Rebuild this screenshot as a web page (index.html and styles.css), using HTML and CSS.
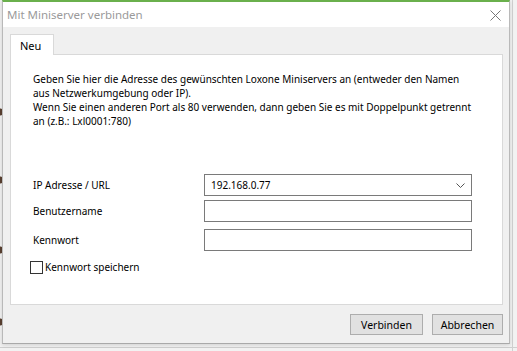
FILE: index.html
```html
<!DOCTYPE html>
<html lang="de">
<head>
    <meta charset="UTF-8">
    <title>Mit Miniserver verbinden</title>
    <link rel="stylesheet" href="styles.css">
</head>
<body>
    <div class="backdrop">
        <div class="dialog">
            <div class="titlebar">
                <span class="title">Mit Miniserver verbinden</span>
                <svg class="close" width="11" height="11" viewBox="0 0 11 11">
                    <path d="M0.5 0.5 L10.5 10.5 M10.5 0.5 L0.5 10.5" stroke="#777" stroke-width="1" fill="none"/>
                </svg>
            </div>

            <div class="body">
                <div class="tabs">
                    <div class="tab">Neu</div>
                </div>

                <div class="panel">
                    <p class="info">
                        Geben Sie hier die Adresse des gewünschten Loxone Miniservers an (entweder den Namen<br>
                        aus Netzwerkumgebung oder IP).<br>
                        Wenn Sie einen anderen Port als 80 verwenden, dann geben Sie es mit Doppelpunkt getrennt<br>
                        an (z.B.: Lxl0001:780)
                    </p>

                    <div class="form">
                        <div class="row row-ip">
                            <label>IP Adresse / URL</label>
                            <div class="combo">
                                <span>192.168.0.77</span>
                                <svg width="9" height="5" viewBox="0 0 9 5">
                                    <path d="M0.5 0.5 L4.5 4.5 L8.5 0.5" stroke="#555" stroke-width="1" fill="none"/>
                                </svg>
                            </div>
                        </div>
                        <div class="row row-user">
                            <label>Benutzername</label>
                            <div class="field"></div>
                        </div>
                        <div class="row row-pass">
                            <label>Kennwort</label>
                            <div class="field"></div>
                        </div>
                        <div class="check">
                            <span class="box"></span>
                            <span>Kennwort speichern</span>
                        </div>
                    </div>
                </div>

                <div class="footer">
                    <button class="btn btn-connect">Verbinden</button>
                    <button class="btn btn-cancel">Abbrechen</button>
                </div>
            </div>
        </div>
    </div>
</body>
</html>
```

FILE: styles.css
```css
body {
    margin: 0;
    padding: 0;
    background-color: #ececec;
    font-family: "Noto Sans", "Open Sans", sans-serif;
    font-size: 10px;
    color: #000;
    width: 517px;
    height: 351px;
    overflow: hidden;
}
/* window behind the dialog, only its edges show */
.backdrop {
    height: 351px;
    background:
        radial-gradient(circle at 0 112px, #5a4030 3px, transparent 4px),
        radial-gradient(circle at 0 180px, #5a4030 3px, transparent 4px),
        radial-gradient(circle at 0 250px, #5a4030 3px, transparent 4px),
        radial-gradient(circle at 0 322px, #5a4030 3px, transparent 4px),
        linear-gradient(to right, transparent 512px, #d0d0d0 512px, #d0d0d0 513px, transparent 513px),
        linear-gradient(to bottom, transparent 347px, #cfcfcf 347px, #cfcfcf 348px, transparent 348px),
        #f2f2f2;
}
.dialog {
    margin-left: 2px;
    width: 506px;
    height: 341px;
    border-top: 2px solid #6ab04c;
    border-left: 1px solid #b9b9b9;
    border-right: 1px solid #b9b9b9;
    border-bottom: 1px solid #a9a9a9;
    box-shadow: 0 1px 4px rgba(0, 0, 0, 0.15);
    background-color: #f0f0f0;
    display: flex;
    flex-direction: column;
}
.titlebar {
    height: 25px;
    background-color: #fff;
    display: flex;
    align-items: center;
    justify-content: space-between;
    padding: 0 8px 0 4px;
}
.title {
    color: #9a9a9a;
    font-size: 11.5px;
}
.close {
    margin-top: 1px;
}
.body {
    flex: 1;
    display: flex;
    flex-direction: column;
    padding: 0 6px 0 7px;
}
.tabs {
    height: 27px;
    display: flex;
    align-items: flex-end;
}
.tab {
    width: 44px;
    height: 21px;
    box-sizing: border-box;
    background-color: #fff;
    border: 1px solid #d9d9d9;
    border-bottom: none;
    padding: 3px 0 0 9px;
    margin-bottom: -1px;
    position: relative;
    z-index: 1;
    font-size: 11px;
}
.panel {
    height: 251px;
    box-sizing: border-box;
    background-color: #fff;
    border: 1px solid #d9d9d9;
    padding: 17px 20px 0 22px;
}
.info {
    margin: 0;
    line-height: 14px;
    white-space: nowrap;
}
.form {
    margin-top: 46px;
}
.row {
    display: flex;
    align-items: center;
}
.row label {
    width: 171px;
}
.combo,
.field {
    width: 268px;
    height: 22px;
    box-sizing: border-box;
    border: 1px solid #7a7a7a;
}
.combo {
    display: flex;
    align-items: center;
    justify-content: space-between;
    padding: 0 6px 0 6px;
}
.row-user {
    margin-top: 4px;
}
.row-pass {
    margin-top: 7px;
}
.check {
    display: flex;
    align-items: center;
    margin: 9px 0 0 -3px;
}
.box {
    width: 13px;
    height: 13px;
    box-sizing: border-box;
    border: 1px solid #333;
    margin-right: 2px;
}
.footer {
    flex: 1;
    display: flex;
    justify-content: flex-end;
    align-items: flex-start;
    padding-top: 9px;
    gap: 9px;
}
.btn {
    font-family: inherit;
    font-size: 10.5px;
    height: 21px;
    padding: 0;
    background-color: #e1e1e1;
    border: 1px solid #adadad;
    color: #000;
}
.btn-connect {
    width: 73px;
}
.btn-cancel {
    width: 71px;
}
```
